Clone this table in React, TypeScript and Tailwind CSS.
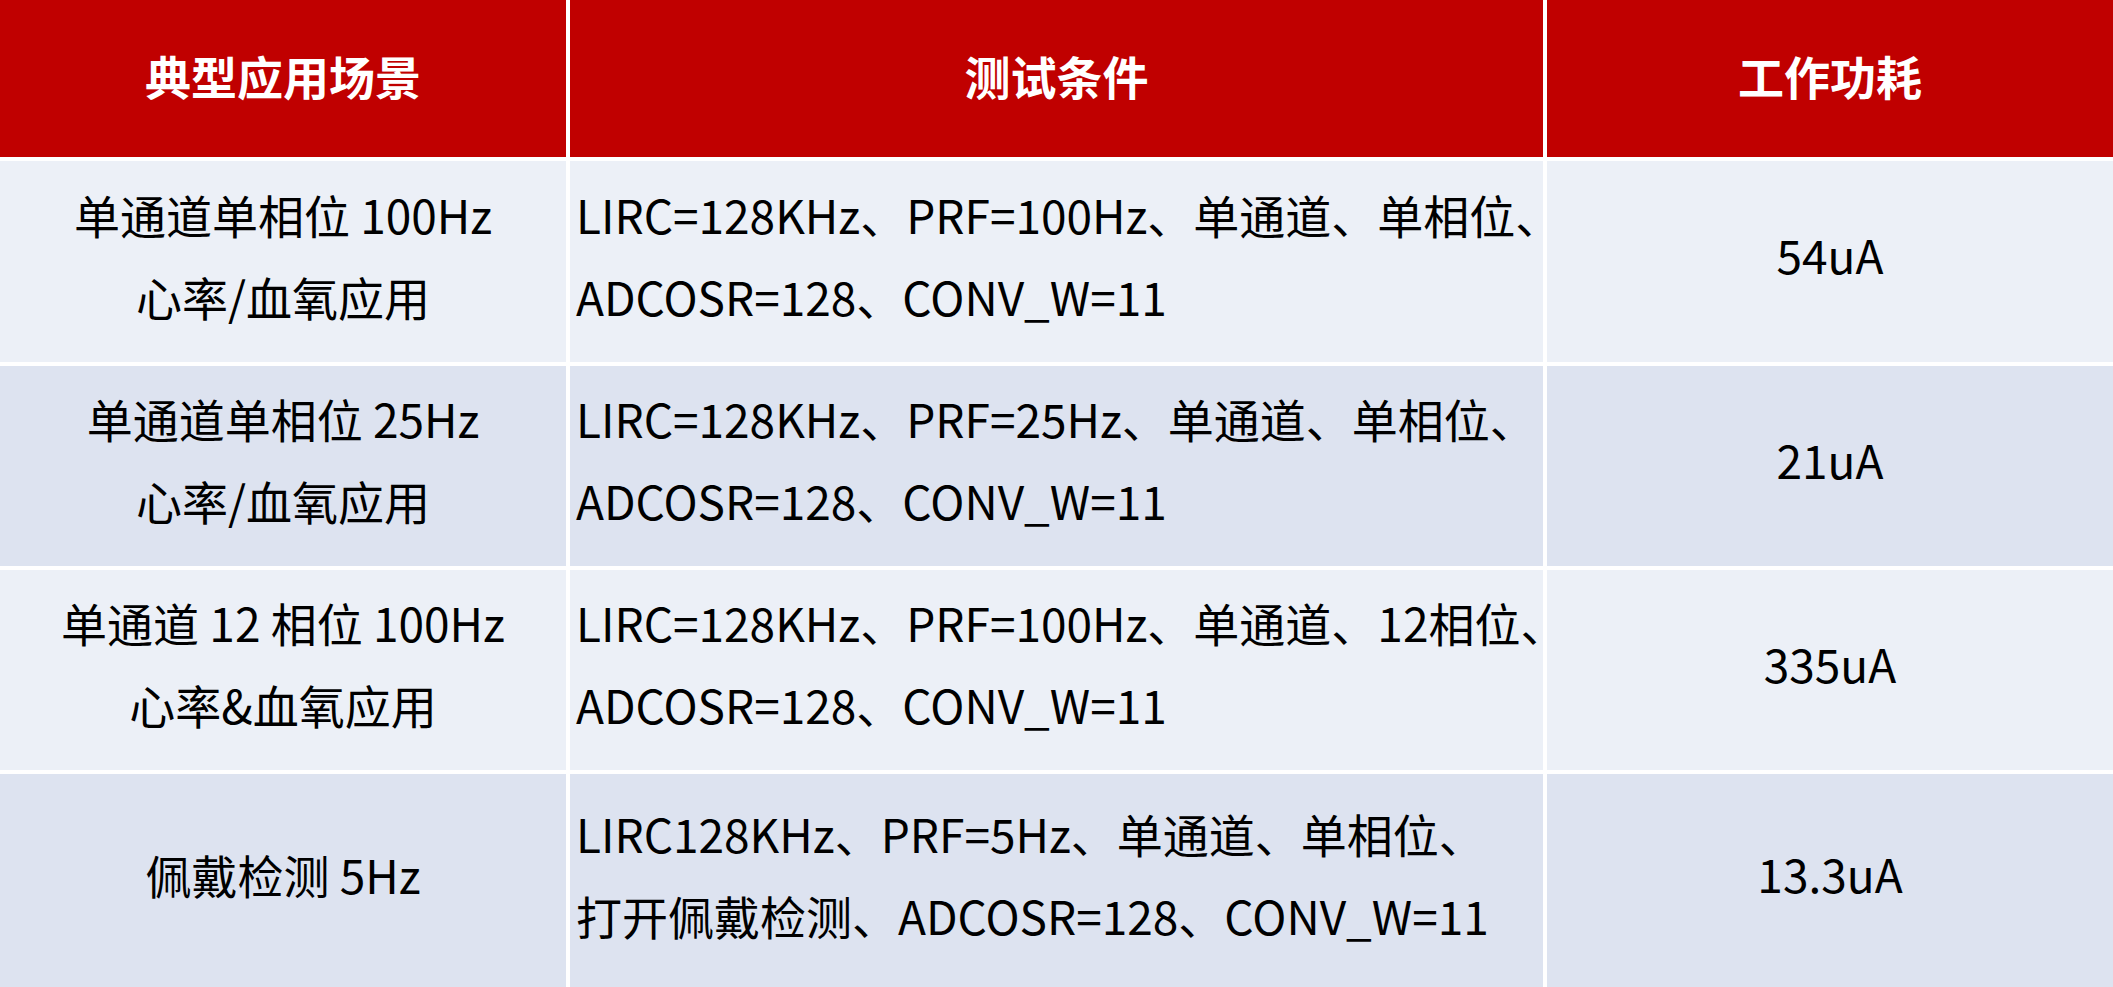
import React from 'react';

const rows = [
  {
    scene: ['单通道单相位 100Hz', '心率/血氧应用'],
    cond: ['LIRC=128KHz、PRF=100Hz、单通道、单相位、', 'ADCOSR=128、CONV_W=11'],
    power: '54uA',
    bg: 'bg-[#ecf0f7]',
  },
  {
    scene: ['单通道单相位 25Hz', '心率/血氧应用'],
    cond: ['LIRC=128KHz、PRF=25Hz、单通道、单相位、', 'ADCOSR=128、CONV_W=11'],
    power: '21uA',
    bg: 'bg-[#dde3f0]',
  },
  {
    scene: ['单通道 12 相位 100Hz', '心率&血氧应用'],
    cond: ['LIRC=128KHz、PRF=100Hz、单通道、12相位、', 'ADCOSR=128、CONV_W=11'],
    power: '335uA',
    bg: 'bg-[#ecf0f7]',
  },
  {
    scene: ['佩戴检测 5Hz'],
    cond: ['LIRC128KHz、PRF=5Hz、单通道、单相位、', '打开佩戴检测、ADCOSR=128、CONV_W=11'],
    power: '13.3uA',
    bg: 'bg-[#dde3f0]',
  },
];

export default function App() {
  return (
    <div
      className="h-[987px] w-[2113px] overflow-hidden bg-white"
      style={{ fontFamily: '"Noto Sans CJK SC", "Noto Sans", sans-serif' }}
    >
      <div className="grid h-full grid-cols-[566px_973px_1fr] grid-rows-[157px_201px_200px_200px_1fr] gap-x-[4px] gap-y-[4px] text-[46px] text-black">
        {/* 表头 */}
        <div className="flex items-center justify-center bg-[#c00000] pb-[6px] font-bold text-white">典型应用场景</div>
        <div className="flex items-center justify-center bg-[#c00000] pb-[6px] font-bold text-white">测试条件</div>
        <div className="flex items-center justify-center bg-[#c00000] pb-[6px] font-bold text-white">工作功耗</div>

        {rows.map((r, i) => (
          <React.Fragment key={i}>
            <div className={`flex flex-col items-center justify-center pb-[14px] leading-[82px] ${r.bg}`}>
              {r.scene.map((s, j) => (
                <div key={j} className="whitespace-nowrap">{s}</div>
              ))}
            </div>
            <div className={`flex flex-col justify-center pb-[14px] pl-[6px] leading-[82px] ${r.bg}`}>
              {r.cond.map((s, j) => (
                <div key={j} className="whitespace-nowrap">{s}</div>
              ))}
            </div>
            <div className={`flex items-center justify-center pb-[14px] ${r.bg}`}>{r.power}</div>
          </React.Fragment>
        ))}
      </div>
    </div>
  );
}
